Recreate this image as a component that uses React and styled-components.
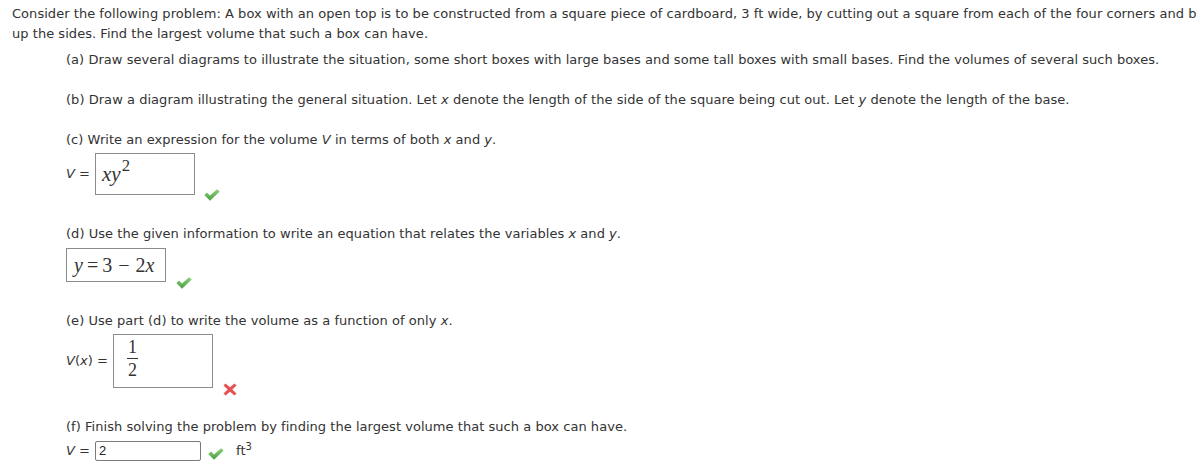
import React from "react";
import styled, { createGlobalStyle } from "styled-components";

const Global = createGlobalStyle`
  html, body { margin: 0; padding: 0; background: #fff; overflow: hidden; }
  body {
    font-family: "DejaVu Sans", Verdana, sans-serif;
    font-size: 13px;
    letter-spacing: 0.04px;
    color: #333;
  }
`;

const Page = styled.div`
  padding: 4px 0 0 12px;
  width: 1400px;
  line-height: 20px;
`;

const Intro = styled.p`
  margin: 0;
  width: 1250px;
`;

const Parts = styled.div`
  margin-left: 54px;
  margin-top: 6px;
`;

const Part = styled.div`
  margin-top: ${(p) => p.$gap}px;
`;

const Question = styled.div`
  height: 20px;
  white-space: nowrap;
`;

const Answer = styled.div`
  display: flex;
  align-items: flex-end;
  margin-top: ${(p) => p.$top}px;
`;

const LabelBox = styled.div`
  display: flex;
  align-items: center;
`;

const Label = styled.span`
  margin-right: 5px;
  white-space: nowrap;
`;

const MathBox = styled.div`
  box-sizing: border-box;
  width: ${(p) => p.$w}px;
  height: ${(p) => p.$h}px;
  border: 1px solid #8c8c8c;
  background: #fff;
  display: flex;
  align-items: ${(p) => p.$align || "center"};
  padding-left: ${(p) => p.$pad}px;
  font-family: "Liberation Serif", "Times New Roman", serif;
  color: #333;
  letter-spacing: 0;
`;

const Var = styled.i`
  font-style: italic;
`;

const MathVar = styled.i`
  font-family: "Liberation Serif", serif;
  font-style: italic;
`;

const Expr = styled.span`
  font-size: ${(p) => p.$size}px;
  line-height: 1;
  white-space: nowrap;
`;

const Sup = styled.sup`
  font-size: 0.8em;
  font-style: normal;
  vertical-align: 0.6em;
  line-height: 0;
  margin-left: 1px;
`;

const Op = styled.span`
  margin: 0 ${(p) => p.$m || 6}px;
`;

const Fraction = styled.span`
  display: inline-flex;
  flex-direction: column;
  align-items: center;
  font-size: 18px;
  line-height: 1;
`;

const Num = styled.span`
  padding: 0 1px 2px;
  border-bottom: 1px solid #333;
`;

const Den = styled.span`
  padding: 2px 1px 0;
`;

const TextInput = styled.div`
  box-sizing: border-box;
  width: 106px;
  height: 20px;
  border: 1px solid #7a7a7a;
  border-radius: 2px;
  font-family: "Liberation Sans", Arial, sans-serif;
  font-size: 13px;
  line-height: 18px;
  padding-left: 3px;
  color: #222;
`;

const Mark = styled.span`
  display: inline-flex;
  margin-left: ${(p) => p.$ml}px;
  margin-bottom: ${(p) => p.$mb}px;
`;

const Unit = styled.span`
  margin-left: 12px;
  align-self: center;
  line-height: 20px;
`;

const UnitSup = styled.sup`
  font-size: 10px;
  vertical-align: 5px;
  line-height: 0;
`;

function Check() {
  return (
    <svg width="16" height="12" viewBox="0 0 16 12">
      <defs>
        <linearGradient id="cg" x1="0" y1="0" x2="0" y2="1">
          <stop offset="0" stopColor="#8fd07a" />
          <stop offset="1" stopColor="#46a040" />
        </linearGradient>
      </defs>
      <path
        d="M0.3 6 L3 3.6 L6 6.4 L13 0.3 L15.7 2.6 L6 11.7 Z"
        fill="url(#cg)"
      />
    </svg>
  );
}

function Cross() {
  return (
    <svg width="14" height="13" viewBox="0 0 14 13">
      <path
        d="M2.5 0.5 L7 4.3 L11.5 0.5 L13.5 2.5 L9.3 6.5 L13.5 10.5 L11.5 12.5 L7 8.7 L2.5 12.5 L0.5 10.5 L4.7 6.5 L0.5 2.5 Z"
        fill="#e65151"
      />
    </svg>
  );
}

export default function App() {
  return (
    <>
      <Global />
      <Page>
        <Intro>
          Consider the following problem: A box with an open top is to be
          constructed from a square piece of cardboard, 3 ft wide, by cutting
          out a square from each of the four corners and bending up the sides.
          Find the largest volume that such a box can have.
        </Intro>
        <Parts>
          <Part $gap={0}>
            <Question>
              (a) Draw several diagrams to illustrate the situation, some short
              boxes with large bases and some tall boxes with small bases. Find
              the volumes of several such boxes.
            </Question>
          </Part>
          <Part $gap={20}>
            <Question>
              (b) Draw a diagram illustrating the general situation. Let{" "}
              <Var>x</Var> denote the length of the side of the square being cut
              out. Let <Var>y</Var> denote the length of the base.
            </Question>
          </Part>
          <Part $gap={20}>
            <Question>
              (c) Write an expression for the volume <Var>V</Var> in terms of
              both <Var>x</Var> and <Var>y</Var>.
            </Question>
            <Answer $top={3}>
              <LabelBox>
                <Label>
                  <Var>V</Var> =
                </Label>
                <MathBox $w={100} $h={42} $pad={6} $align="flex-end">
                  <Expr $size={21} style={{ paddingBottom: 9 }}>
                    <MathVar>xy</MathVar>
                    <Sup>2</Sup>
                  </Expr>
                </MathBox>
              </LabelBox>
              <Mark $ml={9} $mb={-6}>
                <Check />
              </Mark>
            </Answer>
          </Part>
          <Part $gap={29}>
            <Question>
              (d) Use the given information to write an equation that relates
              the variables <Var>x</Var> and <Var>y</Var>.
            </Question>
            <Answer $top={4}>
              <MathBox $w={100} $h={34} $pad={7}>
                <Expr $size={20}>
                  <MathVar>y</MathVar>
                  <Op $m={4}>=</Op>3<Op $m={6}>−</Op>2
                  <MathVar>x</MathVar>
                </Expr>
              </MathBox>
              <Mark $ml={10} $mb={-7}>
                <Check />
              </Mark>
            </Answer>
          </Part>
          <Part $gap={29}>
            <Question>
              (e) Use part (d) to write the volume as a function of only{" "}
              <Var>x</Var>.
            </Question>
            <Answer $top={3}>
              <LabelBox>
                <Label>
                  <Var>V</Var>(<Var>x</Var>) =
                </Label>
                <MathBox $w={100} $h={54} $pad={13} $align="flex-start">
                  <Fraction style={{ marginTop: 3 }}>
                    <Num>1</Num>
                    <Den>2</Den>
                  </Fraction>
                </MathBox>
              </LabelBox>
              <Mark $ml={10} $mb={-8}>
                <Cross />
              </Mark>
            </Answer>
          </Part>
          <Part $gap={29}>
            <Question>
              (f) Finish solving the problem by finding the largest volume that
              such a box can have.
            </Question>
            <Answer $top={4}>
              <LabelBox>
                <Label>
                  <Var>V</Var> =
                </Label>
                <TextInput>2</TextInput>
              </LabelBox>
              <Mark $ml={7} $mb={1}>
                <Check />
              </Mark>
              <Unit>
                ft<UnitSup>3</UnitSup>
              </Unit>
            </Answer>
          </Part>
        </Parts>
      </Page>
    </>
  );
}
